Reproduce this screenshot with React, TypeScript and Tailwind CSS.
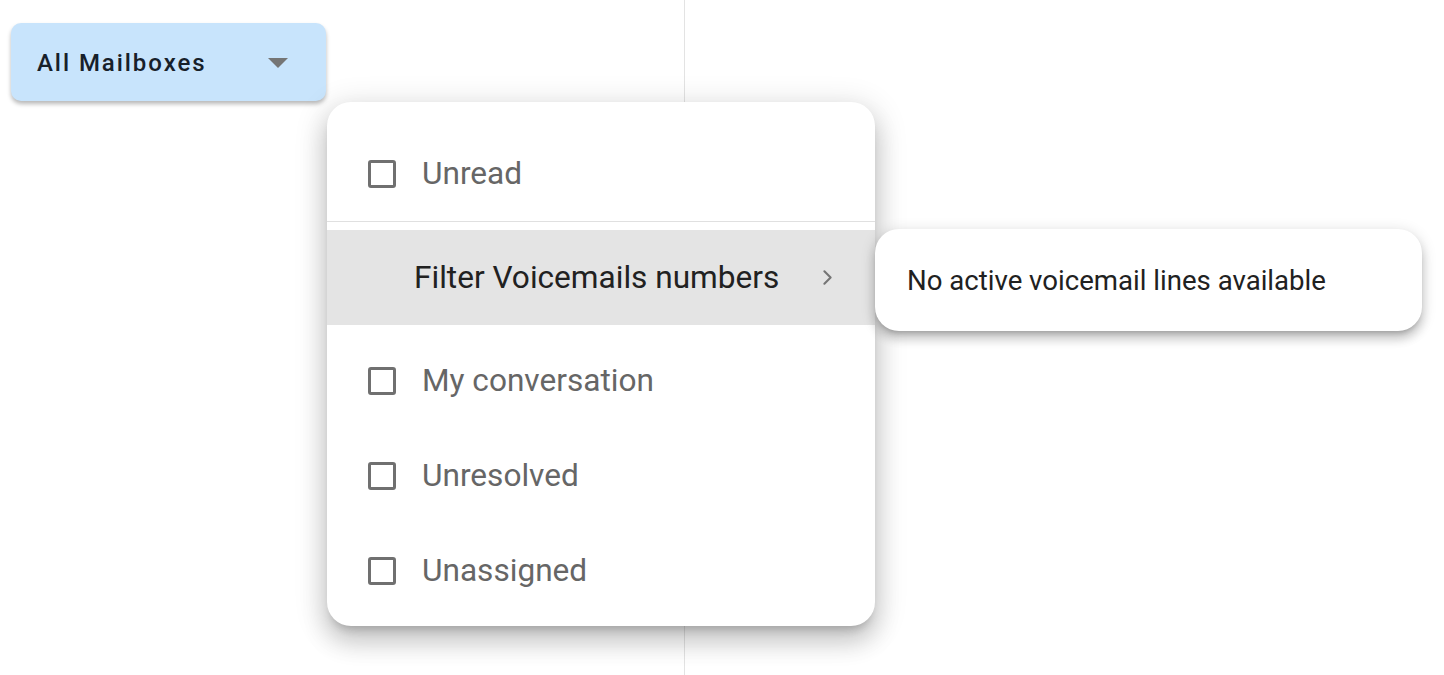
import { ChevronRight } from 'lucide-react';

const font = { fontFamily: 'Roboto, "Noto Sans", sans-serif' };

function CheckItem({ label }: { label: string }) {
  return (
    <div className="h-[95px] flex items-center pl-[41px]">
      <span className="w-[28px] h-[28px] border-[3px] border-[#707070] rounded-[3px] shrink-0" />
      <span className="ml-[26px] text-[31.6px] text-[#666666] leading-none">{label}</span>
    </div>
  );
}

export default function App() {
  return (
    <div className="relative w-[1444px] h-[675px] bg-white overflow-hidden" style={font}>
      <div className="flex h-full">
        {/* left column */}
        <div className="w-[685px] h-full border-r border-[#e3e3e3] pl-[11px] pt-[23px]">
          <button className="w-[315px] h-[78px] bg-[#c8e4fc] rounded-[10px] shadow-[0_3px_4px_rgba(0,0,0,0.28)] flex items-center pl-[26px] pr-[38px] pt-[2px]">
            <span className="text-[24px] font-medium tracking-[1.95px] text-[#17202a]">All Mailboxes</span>
            <span className="ml-auto w-0 h-0 border-l-[10px] border-r-[10px] border-t-[10px] border-l-transparent border-r-transparent border-t-[#757575]" />
          </button>
        </div>
        <div className="flex-1" />
      </div>

      {/* filter menu */}
      <div className="absolute left-[327px] top-[102px] w-[548px] bg-white rounded-[24px] pt-[24px] pb-[8px] shadow-[0_8px_10px_-5px_rgba(0,0,0,0.2),0_16px_24px_2px_rgba(0,0,0,0.14),0_6px_30px_5px_rgba(0,0,0,0.12)]">
        <CheckItem label="Unread" />
        <div className="h-px bg-[#e0e0e0]" />
        <div className="mt-[8px] h-[95px] bg-[#e4e4e4] flex items-center pl-[87px] pr-[35px]">
          <span className="text-[31.6px] text-[#212121] leading-none">Filter Voicemails numbers</span>
          <ChevronRight className="ml-auto w-[25px] h-[25px] text-[#757575]" strokeWidth={2} />
        </div>
        <div className="mt-[8px]">
          <CheckItem label="My conversation" />
          <CheckItem label="Unresolved" />
          <CheckItem label="Unassigned" />
        </div>
      </div>

      {/* submenu */}
      <div className="absolute left-[875px] top-[229px] w-[547px] h-[102px] bg-white rounded-[24px] flex items-center pl-[32px] pt-[2px] shadow-[0_5px_5px_-3px_rgba(0,0,0,0.2),0_8px_10px_1px_rgba(0,0,0,0.14),0_3px_14px_2px_rgba(0,0,0,0.12)]">
        <span className="text-[27.6px] text-[#212121] leading-none">No active voicemail lines available</span>
      </div>
    </div>
  );
}
